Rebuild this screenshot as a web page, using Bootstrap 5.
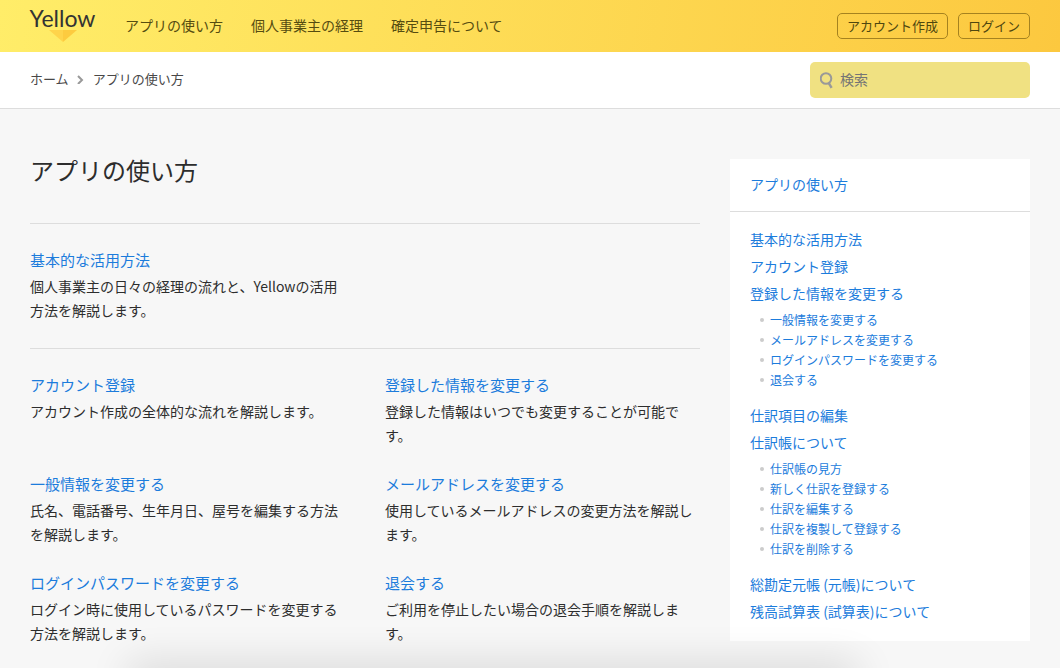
<!DOCTYPE html>
<html lang="ja">
<head>
<meta charset="utf-8">
<meta name="viewport" content="width=device-width, initial-scale=1">
<title>アプリの使い方 | Yellow</title>
<link href="https://cdn.jsdelivr.net/npm/bootstrap@5.3.0/dist/css/bootstrap.min.css" rel="stylesheet">
<style>
  :root { --gutter: 30px; --line: #ddd; --blue: #1c7cdc; }
  body { background: #f7f7f7; color: #2d2d2d; font: 14px/24px "Noto Sans CJK JP", sans-serif; }
  a { color: var(--blue); text-decoration: none; }
  .gutter-x { padding-left: var(--gutter); padding-right: var(--gutter); }

  .site-bar { min-height: 52px; background: linear-gradient(100deg, #ffed69, #fcc83f); }
  .logo { width: 65px; height: 52px; padding-top: 6px; color: #333; font: 23px/24px Lato, sans-serif; }
  .logo:hover { color: #333; }
  .site-nav { gap: 4px 28px; margin-left: 30px; padding-bottom: 3px; }
  .site-nav a { color: #554c10; }
  .site-actions { gap: 10px; }
  .btn-outline-site { --bs-btn-color: #4f470f; --bs-btn-border-color: #a5821f; --bs-btn-hover-bg: #fbdc6b; --bs-btn-hover-border-color: #a5821f;
    --bs-btn-padding-x: 9px; --bs-btn-padding-y: 0; --bs-btn-font-size: 13px; --bs-btn-line-height: 24px; --bs-btn-border-radius: 5px; }

  .crumb-bar { min-height: 57px; border-bottom: 1px solid var(--line); }
  .crumbs { padding-bottom: 3px; font-size: 13px; color: #484848; }
  .crumbs a { color: inherit; }
  .search-box { width: 220px; height: 36px; padding: 0 10px; gap: 6px; border-radius: 5px; background: #f0e182; }
  .search-box input { padding: 0 0 3px; font-size: 14px; line-height: 24px; color: #333; }
  .search-box input::placeholder { color: #757575; opacity: 1; }

  .page-body { gap: 30px; padding-top: 50px; padding-bottom: 20px; }
  .page-title { margin: -1px 0 41px; font-size: 24px; line-height: 24px; }
  .topics { display: grid; grid-template-columns: repeat(2, minmax(0, 1fr)); gap: 25px 40px; padding: 24px 0 26px; border-top: 1px solid var(--line); }
  .topics:last-child { padding-bottom: 0; }
  .topics h2 { margin-bottom: 2px; font-size: 15px; line-height: 24px; }

  .side-panel { flex: 0 0 300px; background: #fff; }
  .side-head { padding: 13px 20px 15px; border-bottom: 1px solid var(--line); }
  .side-list { padding: 14px 20px 16px; line-height: 27px; }
  .side-sub { margin: 3px 0 12px; padding-left: 10px; font-size: 12px; line-height: 20px; }
  .side-sub li { display: flex; align-items: center; gap: 6px; }
  .side-sub li::before { content: ""; width: 4px; height: 4px; border-radius: 50%; background: #ccc; }

  .bottom-shade { left: 13%; right: 20%; height: 10px; bottom: -16px; pointer-events: none; box-shadow: 0 0 40px 10px rgba(0, 0, 0, .14); }
  @media (max-width: 800px) { .page-body { flex-direction: column; } .side-panel { flex-basis: auto; width: 100%; } }
</style>
</head>
<body>
<header class="site-bar gutter-x d-flex flex-wrap align-items-center">
  <a href="#" class="logo d-flex flex-column align-items-center">Yellow
    <svg width="28" height="12" viewBox="0 0 28 12" aria-hidden="true"><path d="M0 0h14v12z" fill="#ffd44b"/><path d="M14 0h14L14 12z" fill="#fdcb3f"/></svg>
  </a>
  <nav class="site-nav d-flex flex-wrap">
    <a href="#">アプリの使い方</a>
    <a href="#">個人事業主の経理</a>
    <a href="#">確定申告について</a>
  </nav>
  <div class="site-actions d-flex ms-auto">
    <button type="button" class="btn btn-outline-site">アカウント作成</button>
    <button type="button" class="btn btn-outline-site">ログイン</button>
  </div>
</header>

<div class="crumb-bar gutter-x bg-white d-flex flex-wrap align-items-center justify-content-between">
  <nav aria-label="パンくず">
    <ol class="crumbs list-unstyled d-flex align-items-center gap-2 mb-0">
      <li><a href="#">ホーム</a></li>
      <li class="d-flex" aria-hidden="true"><svg width="8" height="10" viewBox="0 0 8 10" fill="none" stroke="#999" stroke-width="2"><path d="M1 2l4 4-4 4"/></svg></li>
      <li aria-current="page">アプリの使い方</li>
    </ol>
  </nav>
  <form class="search-box d-flex align-items-center" role="search">
    <label for="q" class="d-flex" aria-label="検索"><svg width="14" height="17" viewBox="0 0 14 17" fill="none" stroke="#999" stroke-width="2"><circle cx="6" cy="6.5" r="5.3"/><path d="M8.8 11.2l2.8 4.6" stroke-width="2.4"/></svg></label>
    <input id="q" type="search" class="border-0 bg-transparent flex-fill w-100" placeholder="検索">
  </form>
</div>

<div class="page-body gutter-x d-flex align-items-start">
  <main class="flex-fill">
    <h1 class="page-title fw-normal">アプリの使い方</h1>
    <section class="topics">
      <article>
        <h2 class="fw-normal"><a href="#">基本的な活用方法</a></h2>
        <p class="mb-0">個人事業主の日々の経理の流れと、Yellowの活用方法を解説します。</p>
      </article>
    </section>
    <section class="topics">
      <article>
        <h2 class="fw-normal"><a href="#">アカウント登録</a></h2>
        <p class="mb-0">アカウント作成の全体的な流れを解説します。</p>
      </article>
      <article>
        <h2 class="fw-normal"><a href="#">登録した情報を変更する</a></h2>
        <p class="mb-0">登録した情報はいつでも変更することが可能です。</p>
      </article>
      <article>
        <h2 class="fw-normal"><a href="#">一般情報を変更する</a></h2>
        <p class="mb-0">氏名、電話番号、生年月日、屋号を編集する方法を解説します。</p>
      </article>
      <article>
        <h2 class="fw-normal"><a href="#">メールアドレスを変更する</a></h2>
        <p class="mb-0">使用しているメールアドレスの変更方法を解説します。</p>
      </article>
      <article>
        <h2 class="fw-normal"><a href="#">ログインパスワードを変更する</a></h2>
        <p class="mb-0">ログイン時に使用しているパスワードを変更する方法を解説します。</p>
      </article>
      <article>
        <h2 class="fw-normal"><a href="#">退会する</a></h2>
        <p class="mb-0">ご利用を停止したい場合の退会手順を解説します。</p>
      </article>
    </section>
  </main>

  <aside class="side-panel">
    <div class="side-head"><a href="#">アプリの使い方</a></div>
    <ul class="side-list list-unstyled mb-0">
      <li><a href="#">基本的な活用方法</a></li>
      <li><a href="#">アカウント登録</a></li>
      <li><a href="#">登録した情報を変更する</a>
        <ul class="side-sub list-unstyled">
          <li><a href="#">一般情報を変更する</a></li>
          <li><a href="#">メールアドレスを変更する</a></li>
          <li><a href="#">ログインパスワードを変更する</a></li>
          <li><a href="#">退会する</a></li>
        </ul>
      </li>
      <li><a href="#">仕訳項目の編集</a></li>
      <li><a href="#">仕訳帳について</a>
        <ul class="side-sub list-unstyled">
          <li><a href="#">仕訳帳の見方</a></li>
          <li><a href="#">新しく仕訳を登録する</a></li>
          <li><a href="#">仕訳を編集する</a></li>
          <li><a href="#">仕訳を複製して登録する</a></li>
          <li><a href="#">仕訳を削除する</a></li>
        </ul>
      </li>
      <li><a href="#">総勘定元帳 (元帳)について</a></li>
      <li><a href="#">残高試算表 (試算表)について</a></li>
    </ul>
  </aside>
</div>
<div class="bottom-shade position-fixed" aria-hidden="true"></div>
<script src="https://cdn.jsdelivr.net/npm/bootstrap@5.3.0/dist/js/bootstrap.bundle.min.js"></script>
</body>
</html>
